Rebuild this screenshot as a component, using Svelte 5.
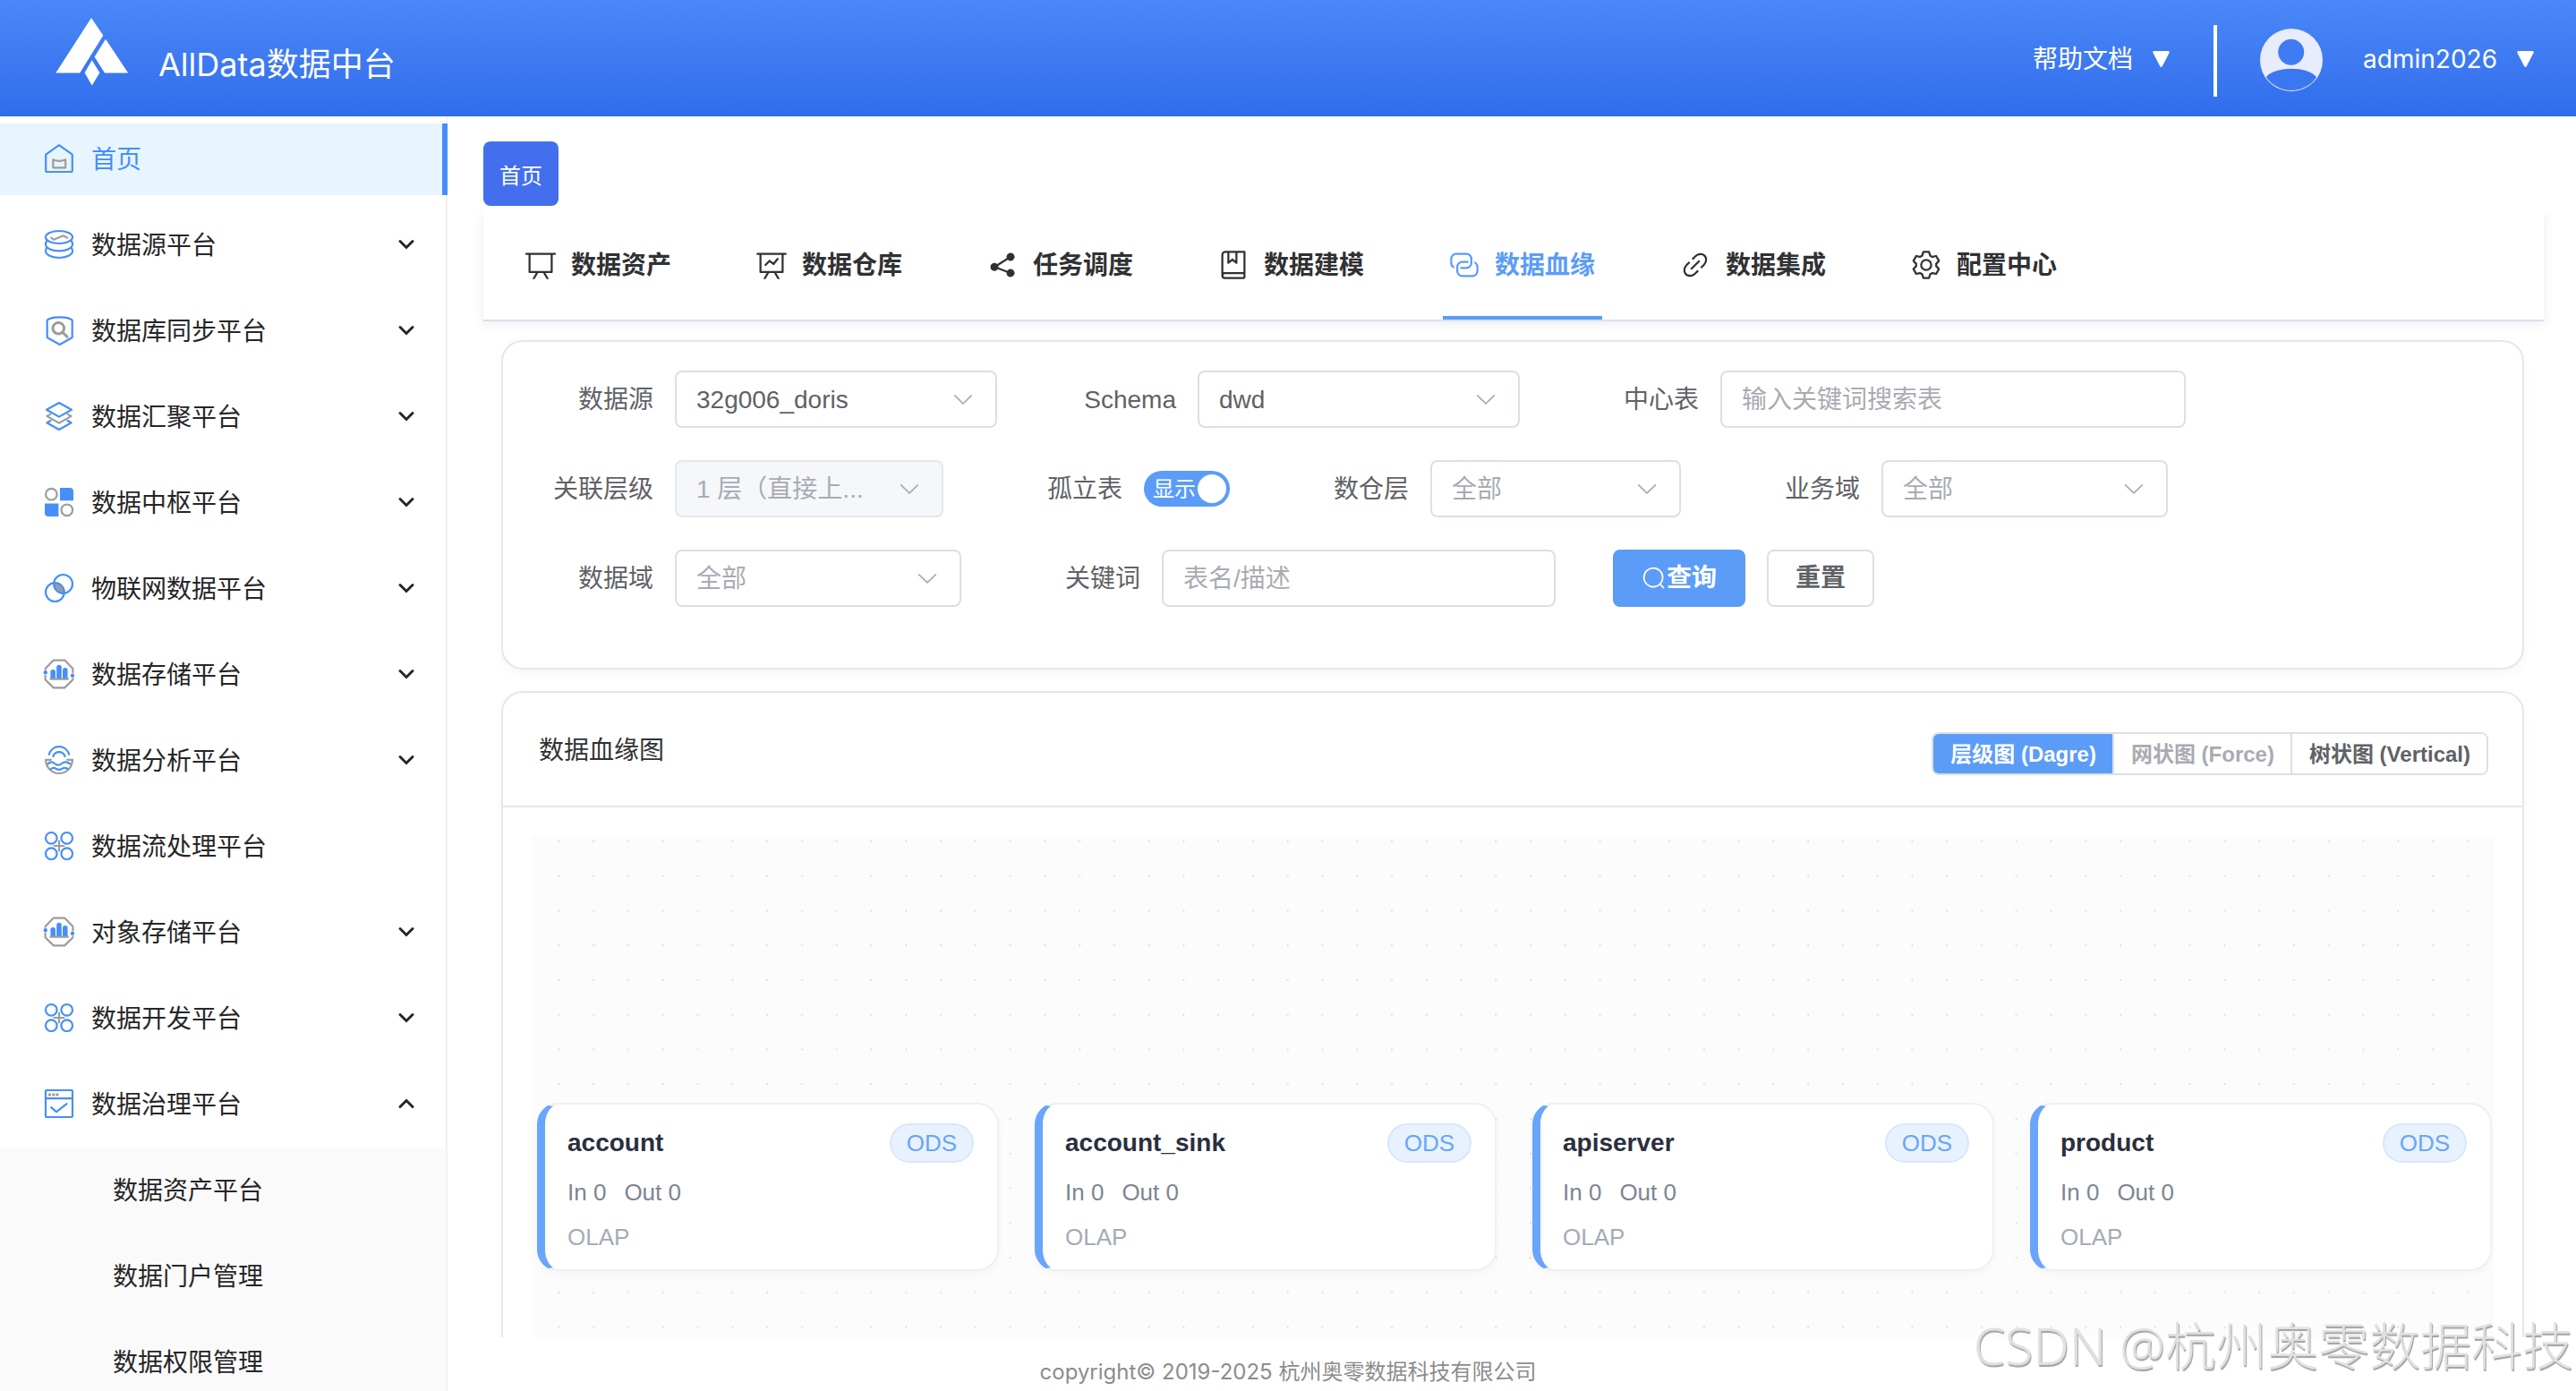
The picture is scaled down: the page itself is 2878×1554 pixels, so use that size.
<script>
  const menu = [
    { icon: 'db', label: '数据源平台', arrow: true },
    { icon: 'shield', label: '数据库同步平台', arrow: true },
    { icon: 'layers', label: '数据汇聚平台', arrow: true },
    { icon: 'hub', label: '数据中枢平台', arrow: true },
    { icon: 'iot', label: '物联网数据平台', arrow: true },
    { icon: 'storage', label: '数据存储平台', arrow: true },
    { icon: 'analysis', label: '数据分析平台', arrow: true },
    { icon: 'flow', label: '数据流处理平台', arrow: false },
    { icon: 'storage', label: '对象存储平台', arrow: true },
    { icon: 'flow', label: '数据开发平台', arrow: true },
    { icon: 'window', label: '数据治理平台', arrow: true, open: true }
  ];
  const submenu = ['数据资产平台', '数据门户管理', '数据权限管理'];

  const tabs = [
    {
      label: '数据资产',
      d: 'M32 128h960v64H32z M192 192v512h640V192H192zm-64-64h768v608a32 32 0 0 1-32 32H160a32 32 0 0 1-32-32V128z M322.176 960H248.32l110.848-192h73.856L322.176 960zm453.888 0h-73.856L591.36 768h73.856L776.064 960z'
    },
    {
      label: '数据仓库',
      d: 'M359.168 768H160a32 32 0 0 1-32-32V192H64a32 32 0 0 1 0-64h896a32 32 0 1 1 0 64h-64v544a32 32 0 0 1-32 32H665.216l110.848 192h-73.856L591.36 768H433.024L322.176 960H248.32l110.848-192zM832 192H192v512h640V192zM342.656 534.656a32 32 0 1 1-45.312-45.312L444.992 341.76l125.44 94.08L679.04 300.032a32 32 0 1 1 49.92 39.936L581.632 524.224 451.008 426.24 342.656 534.592z'
    },
    {
      label: '任务调度',
      d: 'm679.872 348.8-301.76 188.608a127.808 127.808 0 0 1 5.12 52.16l279.936 104.96a128 128 0 1 1-22.464 59.904l-279.872-104.96a128 128 0 1 1-16.64-166.272l301.696-188.608a128 128 0 1 1 33.92 54.272z'
    },
    {
      label: '数据建模',
      d: 'M192 736h640V128H256a64 64 0 0 0-64 64v544zm64-672h608a32 32 0 0 1 32 32v672a32 32 0 0 1-32 32H160l-32 57.536V192A128 128 0 0 1 256 64z M240 800a48 48 0 1 0 0 96h592v-96H240zm0-64h656v160a64 64 0 0 1-64 64H240a112 112 0 0 1 0-224zm144-608v250.88l96-76.8 96 76.8V128H384zm-64-64h320v381.44a32 32 0 0 1-51.968 24.96L480 384l-108.032 86.4A32 32 0 0 1 320 445.44V64z'
    },
    {
      label: '数据血缘',
      active: true,
      d: 'M640 384v64H448a128 128 0 0 0-128 128v128a128 128 0 0 0 128 128h320a128 128 0 0 0 128-128V576a128 128 0 0 0-64-110.848V394.88c74.56 26.368 128 97.472 128 181.056v128a192 192 0 0 1-192 192H448a192 192 0 0 1-192-192V576a192 192 0 0 1 192-192h192z M384 640v-64h192a128 128 0 0 0 128-128V320a128 128 0 0 0-128-128H256a128 128 0 0 0-128 128v128a128 128 0 0 0 64 110.848v70.272A192.064 192.064 0 0 1 64 448V320a192 192 0 0 1 192-192h320a192 192 0 0 1 192 192v128a192 192 0 0 1-192 192H384z'
    },
    {
      label: '数据集成',
      d: 'M715.648 625.152 670.4 579.904l90.496-90.56c75.008-74.944 85.12-186.368 22.656-248.896-62.528-62.464-173.952-52.352-248.96 22.656L444.16 353.6l-45.248-45.248 90.496-90.496c100.032-99.968 251.968-110.08 339.456-22.656 87.488 87.488 77.312 239.424-22.656 339.456l-90.496 90.496zm-90.496 90.496-90.496 90.496C434.624 906.112 282.688 916.224 195.2 828.8c-87.488-87.488-77.312-239.424 22.656-339.456l90.496-90.496 45.248 45.248-90.496 90.56c-75.008 74.944-85.12 186.368-22.656 248.896 62.528 62.464 173.952 52.352 248.96-22.656l90.496-90.496 45.248 45.248zm0-362.048 45.248 45.248L398.848 670.4 353.6 625.152 625.152 353.6z'
    },
    {
      label: '配置中心',
      d: 'M600.704 64a32 32 0 0 1 30.464 22.208l35.2 109.376c14.784 7.232 28.928 15.36 42.432 24.512l112.384-24.192a32 32 0 0 1 34.432 15.36L944.32 364.8a32 32 0 0 1-4.032 37.504l-77.12 85.12a357.12 357.12 0 0 1 0 49.024l77.12 85.248a32 32 0 0 1 4.032 37.504l-88.704 153.6a32 32 0 0 1-34.432 15.296L708.8 803.904c-13.44 9.088-27.648 17.28-42.368 24.512l-35.264 109.376A32 32 0 0 1 600.704 960H423.296a32 32 0 0 1-30.464-22.208L357.696 828.48a351.616 351.616 0 0 1-42.56-24.64l-112.32 24.256a32 32 0 0 1-34.432-15.36L79.68 659.2a32 32 0 0 1 4.032-37.504l77.12-85.248a357.12 357.12 0 0 1 0-48.896l-77.12-85.248A32 32 0 0 1 79.68 364.8l88.704-153.6a32 32 0 0 1 34.432-15.296l112.32 24.256c13.568-9.152 27.776-17.408 42.56-24.64l35.2-109.312A32 32 0 0 1 423.232 64H600.64zm-23.424 64H446.72l-36.352 113.088-24.512 11.968a294.113 294.113 0 0 0-34.816 20.096l-22.656 15.36-116.224-25.088-65.28 113.152 79.68 88.192-1.92 27.136a293.12 293.12 0 0 0 0 40.192l1.92 27.136-79.808 88.192 65.344 113.152 116.224-25.024 22.656 15.296a294.113 294.113 0 0 0 34.816 20.096l24.512 11.968L446.72 896h130.688l36.48-113.152 24.448-11.904a288.282 288.282 0 0 0 34.752-20.096l22.592-15.296 116.288 25.024 65.28-113.152-79.744-88.192 1.92-27.136a293.12 293.12 0 0 0 0-40.256l-1.92-27.136 79.808-88.128-65.344-113.152-116.288 24.96-22.592-15.232a287.616 287.616 0 0 0-34.752-20.096l-24.448-11.904L577.344 128zM512 320a192 192 0 1 1 0 384 192 192 0 0 1 0-384zm0 64a128 128 0 1 0 0 256 128 128 0 0 0 0-256z'
    }
  ];

  const fields = [
    { id: 'source', label: '数据源', kind: 'select', value: '32g006_doris', size: 'w360' },
    { id: 'schema', label: 'Schema', kind: 'select', value: 'dwd', size: 'w360' },
    { id: 'center', label: '中心表', kind: 'input', value: '输入关键词搜索表', size: 'w520' },
    { id: 'depth', label: '关联层级', kind: 'select', value: '1 层（直接上...', size: 'w300', disabled: true, muted: true },
    { id: 'orphan', label: '孤立表', kind: 'switch' },
    { id: 'layer', label: '数仓层', kind: 'select', value: '全部', size: 'w280', muted: true },
    { id: 'biz', label: '业务域', kind: 'select', value: '全部', size: 'w320', muted: true },
    { id: 'domain', label: '数据域', kind: 'select', value: '全部', size: 'w320', muted: true },
    { id: 'keyword', label: '关键词', kind: 'input', value: '表名/描述', size: 'w440' }
  ];

  const nodes = [
    { name: 'account', x: 6 },
    { name: 'account_sink', x: 562 },
    { name: 'apiserver', x: 1118 },
    { name: 'product', x: 1674 }
  ].map((n) => ({ ...n, y: 298 }));
</script>

{#snippet sideIcon(name)}
  <svg class="side-icon" viewBox="0 0 32 32" aria-hidden="true">
    {#if name === 'home'}
      <path class="b" d="M16 1.2 30.8 11.6V30a1 1 0 0 1-1 1H2.2a1 1 0 0 1-1-1V11.6Z" />
      <path class="g" d="M9.3 17.3Q16.2 20.6 23.2 17.3V26.3H9.3Z" />
    {:else if name === 'db'}
      <ellipse class="b" cx="16" cy="8" rx="15" ry="7" />
      <path class="b" d="M2.2 12.2C1.2 13.4 1 14.6 1 16c0 4 6.600 7.300 15 7.300S31 20 31 16c0-1.400-.2-2.600-1.200-3.800" />
      <path class="b" d="M2.200 20C1.200 21.200 1 22.400 1 23.600 1 27.600 7.600 31 16 31s15-3.400 15-7.400c0-1.200-.2-2.400-1.200-3.600" />
      <path class="g" d="M7.300 8.700 10 10.700 20.700 6.300 25.300 8.700" />
    {:else if name === 'shield'}
      <path class="b" d="M2.700 4.600C8 .4 25.400.4 30.700 4.600V24L16.700 32 2.700 24Z" />
      <circle class="g thick" cx="15.300" cy="13.700" r="6.300" />
      <path class="g thick" d="m20 18.400 5 4.800" />
    {:else if name === 'layers'}
      <path class="g" d="M6.500 13.600 2.400 15.900 16 23.600 29.600 15.900 25.500 13.600" />
      <path class="b" d="M6.500 21 2.400 23.300 16 31 29.600 23.300 25.500 21" />
      <path class="b" d="M16 1 30 8.800 16 16.600 2 8.800Z" />
    {:else if name === 'hub'}
      <circle class="g" cx="7.400" cy="7.200" r="6.300" />
      <circle class="g" cx="24.800" cy="24.800" r="6.300" />
      <path class="bf" d="M17 0h11a4 4 0 0 1 4 4v10.200H17ZM0 17.400h15.400V32H4a4 4 0 0 1-4-4Z" />
    {:else if name === 'iot'}
      <path class="gf" d="M10.600 10.200A10.500 10.500 0 0 1 21.800 21.400 10.500 10.500 0 0 1 10.600 10.200Z" />
      <circle class="b" cx="20.600" cy="11.400" r="10.400" />
      <circle class="b" cx="11.400" cy="20.600" r="10.400" />
    {:else if name === 'storage'}
      <path class="g" d="M.6 10.800V10L9.800.6H22.200L31.400 10v4.200M31.400 21.400V22.200L22.200 31.400H9.800L.6 22.200V17.800" />
      <path class="bf" d="M6.400 21.200v-7.400a2.800 2.800 0 0 1 5.600 0v7.400ZM13.200 21.200V8.600a2.800 2.800 0 0 1 5.600 0v12.600ZM20 21.200v-9.400a2.800 2.800 0 0 1 5.600 0v9.400Z" />
      <path class="g" d="M6.400 21.600H26" />
      <circle class="bf" cx=".8" cy="14.200" r="2.200" />
      <circle class="bf" cx="31" cy="17.800" r="2.200" />
    {:else if name === 'analysis'}
      <path class="b" d="M4.800 9.800C8.400-1.800 23.600-1.800 27.200 9.800M9.400 12c2.400-6.400 10.800-6.400 13.200 0" />
      <path class="g" d="M6.800 15.800H1C1.600 25.600 8.400 31 16 31s14.400-5.400 15-15.200h-5.800" />
      <path class="b" d="M3.600 20.400c2.400-2.600 5-2.600 7.400-.4 2.800 2.200 5.400 2.200 8 0 3-2.400 5.600-2.400 9.200.4M6.800 26c2.200-1.800 4-1.600 6 0 2.400 1.400 4.200 1.400 6.400 0 2-1.600 4-1.600 6.400 0" />
    {:else if name === 'flow'}
      <path class="g" d="M16 10.600v10.800M10.600 16h10.800" />
      <circle class="b" cx="7.300" cy="7.300" r="6.300" />
      <circle class="b" cx="24.700" cy="7.300" r="6.300" />
      <circle class="b" cx="7.300" cy="24.700" r="6.300" />
      <circle class="b" cx="24.700" cy="24.700" r="6.300" />
    {:else}
      <rect class="b" x="1" y="1" width="30" height="30" rx="1" />
      <path class="b" d="M1 10.200H31M7.200 20.200 13 25.200 24.600 16.200" />
      <path class="gf" d="M4 4.400h3v3H4ZM8.200 4.400h3v3h-3ZM12.400 4.400h3v3h-3Z" />
    {/if}
  </svg>
{/snippet}

{#snippet caret()}
  <svg class="caret" viewBox="0 0 19 18" aria-hidden="true">
    <path d="M1.200 0H17.800Q19.300.4 18.600 2L10.800 17Q9.500 18.800 8.200 17L.4 2Q-.3.4 1.200 0Z" fill="currentColor" />
  </svg>
{/snippet}

<div class="page">
  <header class="topbar">
    <svg class="logo" viewBox="62 20 82 76" aria-hidden="true">
      <path fill="#fff" d="M102 20 115.300 39.500 89.200 81.500H62.300ZM118 43.700 143.200 81.500H117L105.600 63.400ZM102.700 67.300 111.400 81.300 102.700 95.400 94.600 81.300Z" />
    </svg>
    <h1>AllData数据中台</h1>
    <button class="top-link" type="button">帮助文档 {@render caret()}</button>
    <span class="divider"></span>
    <svg class="avatar" viewBox="0 0 70 70" aria-hidden="true">
      <circle cx="35" cy="35" r="35" fill="#e8ecfb" />
      <circle cx="34.700" cy="26.200" r="14.500" fill="#3f7cf3" />
      <path d="M6.800 54.200C17 41.600 53 41.600 63.200 54.200A34.200 34.200 0 0 1 6.800 54.200Z" fill="#3b77f1" />
    </svg>
    <button class="top-link" type="button">admin2026 {@render caret()}</button>
  </header>

  <nav class="sidebar" aria-label="平台">
    <a class="side-item active" href="#home">{@render sideIcon('home')}<span>首页</span></a>
    {#each menu as m}
      <a class="side-item" href="#menu">
        {@render sideIcon(m.icon)}
        <span>{m.label}</span>
        {#if m.arrow}
          <svg class="chev" viewBox="0 0 18 12" aria-hidden="true">
            <path d={m.open ? 'M2 9.500 9 2.500 16 9.500' : 'M2 2.500 9 9.500 16 2.500'} />
          </svg>
        {/if}
      </a>
    {/each}
    <div class="submenu">
      {#each submenu as s}
        <a class="side-item sub" href="#sub"><span>{s}</span></a>
      {/each}
    </div>
  </nav>

  <main>
    <button class="chip" type="button">首页</button>
    <nav class="tabs" aria-label="模块">
      {#each tabs as t}
        <a class="tab" class:active={t.active} href="#tab">
          <svg viewBox="0 0 1024 1024" aria-hidden="true"><path fill="currentColor" d={t.d} /></svg>
          <span>{t.label}</span>
        </a>
      {/each}
    </nav>

    <div class="content">
      <form class="card filters" onsubmit={(e) => e.preventDefault()}>
        {#each fields as f}
          <div class="field">
            <label for={f.id}>{f.label}</label>
            {#if f.kind === 'select'}
              <span class="select {f.size}">
                <select id={f.id} class:muted={f.muted} disabled={f.disabled}>
                  <option>{f.value}</option>
                </select>
                <svg viewBox="0 0 1024 1024" aria-hidden="true">
                  <path fill="currentColor" d="M831.872 340.864 512 652.672 192.128 340.864a30.592 30.592 0 0 0-42.752 0 29.12 29.12 0 0 0 0 41.6L489.664 714.24a32 32 0 0 0 44.672 0l340.288-331.712a29.12 29.12 0 0 0 0-41.728 30.592 30.592 0 0 0-42.752 0z" />
                </svg>
              </span>
            {:else if f.kind === 'input'}
              <input id={f.id} class="text {f.size}" type="text" placeholder={f.value} />
            {:else}
              <span class="switch">
                <input id={f.id} type="checkbox" role="switch" checked />
                <span class="switch-text">显示</span>
                <span class="knob"></span>
              </span>
            {/if}
          </div>
        {/each}
        <div class="actions">
          <button class="btn primary" type="submit">
            <svg viewBox="0 0 1024 1024" aria-hidden="true">
              <path fill="currentColor" d="m795.904 750.72 124.992 124.928a32 32 0 0 1-45.248 45.248L750.656 795.904a416 416 0 1 1 45.248-45.248zM480 832a352 352 0 1 0 0-704 352 352 0 0 0 0 704z" />
            </svg>查询</button>
          <button class="btn" type="reset">重置</button>
        </div>
      </form>

      <section class="card graph">
        <div class="graph-head">
          <h2>数据血缘图</h2>
          <div class="group">
            <button type="button" class="on">层级图 (Dagre)</button>
            <button type="button" disabled>网状图 (Force)</button>
            <button type="button">树状图 (Vertical)</button>
          </div>
        </div>
        <div class="canvas">
          <svg class="dots" aria-hidden="true">
            <defs>
              <pattern id="dot-grid" x="29.300" y="4.800" width="38.770" height="38.770" patternUnits="userSpaceOnUse">
                <circle cx="1.200" cy="1.200" r="1.100" fill="#dcdcdc" />
              </pattern>
            </defs>
            <rect width="100%" height="100%" fill="url(#dot-grid)" />
          </svg>
          {#each nodes as n}
            <article class="node" style="left: {n.x}px; top: {n.y}px">
              <div class="node-head"><h3>{n.name}</h3><span class="badge">ODS</span></div>
              <p class="io"><span>In 0</span><span>Out 0</span></p>
              <p class="kind">OLAP</p>
            </article>
          {/each}
        </div>
      </section>
    </div>
  </main>

  <footer>copyright© 2019-2025 杭州奥零数据科技有限公司</footer>
  <div class="watermark">CSDN @杭州奥零数据科技</div>
</div>

<style>
  :global(body) {
    margin: 0;
    background: #fff;
  }
  .page {
    position: relative;
    display: grid;
    grid-template: 130px minmax(0, 1fr) 60px / 500px minmax(0, 1fr);
    height: 100vh;
    overflow: hidden;
    font-family: 'Liberation Sans', 'Noto Sans CJK SC', sans-serif;
    font-size: 28px;
    line-height: 40px;
    color: #606266;
  }
  .page :global(*) {
    box-sizing: border-box;
  }
  button,
  input,
  select {
    font: inherit;
    color: inherit;
  }
  a {
    color: inherit;
    text-decoration: none;
  }
  h1,
  h2,
  h3,
  p {
    margin: 0;
    font-weight: 400;
  }
  svg {
    display: block;
    flex: none;
    overflow: visible;
  }

  .topbar {
    grid-column: 1 / -1;
    display: flex;
    align-items: center;
    padding: 0 47px 0 62px;
    background: linear-gradient(#4b88f8, #306dec);
    color: #fff;
    font-family: Inter, 'Noto Sans CJK SC', sans-serif;
  }
  .logo {
    width: 82px;
    height: 76px;
    margin-bottom: 14px;
  }
  h1 {
    flex: 1;
    padding: 14px 0 0 33px;
    font-size: 36px;
    line-height: 48px;
  }
  .top-link {
    display: flex;
    align-items: center;
    gap: 22px;
    padding: 2px 0 0;
    border: 0;
    background: none;
  }
  .caret {
    width: 19px;
    height: 18px;
  }
  .divider {
    width: 4px;
    height: 80px;
    margin: 6px 48px 0 49px;
    background: #fff;
  }
  .avatar {
    width: 70px;
    height: 70px;
    margin: 4px 45px 0 0;
  }

  .sidebar {
    grid-area: 2 / 1 / 4 / 2;
    z-index: 1;
    padding-top: 8px;
    border-right: 2px solid #f0f0f0;
    background: #fff;
    color: #262626;
  }
  .side-item {
    display: flex;
    align-items: center;
    gap: 20px;
    height: 80px;
    margin-bottom: 16px;
    padding: 0 35px 2px 50px;
  }
  .side-item span {
    flex: 1;
    padding-top: 4px;
  }
  .side-item.active {
    margin-right: -2px;
    border-right: 6px solid #468ff8;
    background: #e7f5fe;
    color: #468ff8;
  }
  .submenu {
    margin-top: -8px;
    padding-top: 8px;
    background: #fafafa;
  }
  .side-item.sub {
    padding-left: 126px;
  }
  .side-icon {
    width: 32px;
    height: 32px;
  }
  .b,
  .g {
    fill: none;
    stroke: #468ff8;
    stroke-width: 2.2;
    stroke-linecap: round;
    stroke-linejoin: round;
  }
  .g {
    stroke: #9c9c9c;
  }
  .thick {
    stroke-width: 3;
  }
  .bf {
    fill: #468ff8;
  }
  .gf {
    fill: #9c9c9c;
  }
  .chev {
    width: 18px;
    height: 12px;
    fill: none;
    stroke: #262626;
    stroke-width: 3;
    stroke-linecap: round;
  }

  main {
    display: flex;
    flex-direction: column;
    min-height: 0;
    overflow: hidden;
    padding: 28px 36px 0 40px;
  }
  .chip {
    flex: none;
    align-self: flex-start;
    width: 84px;
    height: 72px;
    margin-bottom: 8px;
    padding: 5px 0 0;
    border: 0;
    border-radius: 8px;
    background: #436fee;
    color: #fff;
    font-size: 24px;
  }
  .tabs {
    flex: none;
    display: flex;
    gap: 80px;
    height: 121px;
    padding: 0 40px;
    border-bottom: 2px solid #dcdfe6;
    background: #fff;
    box-shadow: 0 2px 12px rgba(40, 60, 120, 0.1);
    clip-path: inset(0 -16px -24px);
    color: #303133;
    font-weight: 600;
  }
  .tab {
    display: flex;
    align-items: center;
    padding: 0 8px 0 6px;
    border-bottom: 4px solid transparent;
  }
  .tab svg {
    width: 36px;
    height: 36px;
    margin-right: 16px;
  }
  .tab span {
    padding-top: 2px;
  }
  .tab.active {
    border-color: #5b9cf8;
    color: #5b9cf8;
  }

  .content {
    flex: 1;
    display: flex;
    flex-direction: column;
    gap: 24px;
    min-height: 0;
    padding: 21px 22px 0 20px;
  }
  .card {
    flex: none;
    border: 2px solid #e4e7ed;
    border-radius: 24px;
    background: #fff;
    box-shadow: 0 4px 12px rgba(0, 0, 0, 0.04);
  }
  .filters {
    display: flex;
    flex-wrap: wrap;
    gap: 36px 64px;
    padding: 32px 32px 68px;
  }
  .field {
    display: flex;
    align-items: center;
    height: 64px;
  }
  label {
    width: 160px;
    padding: 2px 24px 0 0;
    text-align: right;
  }
  .select {
    position: relative;
    color: #a8abb2;
  }
  .select svg {
    position: absolute;
    top: 18px;
    right: 24px;
    width: 28px;
    height: 28px;
    pointer-events: none;
  }
  select,
  .text {
    height: 64px;
    padding: 2px 22px 0;
    border: 2px solid #dcdfe6;
    border-radius: 8px;
    background: #fff;
    color: #606266;
  }
  select {
    display: block;
    width: 100%;
    appearance: none;
    opacity: 1;
  }
  select.muted,
  .text::placeholder {
    color: #a8abb2;
  }
  select:disabled {
    border-color: #e4e7ed;
    background: #f5f7fa;
  }
  .w280 {
    width: 280px;
  }
  .w300 {
    width: 300px;
  }
  .w320 {
    width: 320px;
  }
  .w360 {
    width: 360px;
  }
  .w440 {
    width: 440px;
  }
  .w520 {
    width: 520px;
  }
  .switch {
    position: relative;
    display: flex;
    align-items: center;
    justify-content: space-between;
    width: 96px;
    height: 40px;
    padding: 0 4px 0 10px;
    border-radius: 20px;
    background: #5b9cf8;
    color: #fff;
    font-size: 24px;
  }
  .switch input {
    position: absolute;
    inset: 0;
    width: 100%;
    height: 100%;
    margin: 0;
    opacity: 0;
  }
  .switch-text {
    padding-top: 2px;
  }
  .knob {
    width: 32px;
    height: 32px;
    border-radius: 50%;
    background: #fff;
  }
  .actions {
    display: flex;
    gap: 24px;
  }
  .btn {
    display: flex;
    align-items: center;
    height: 64px;
    padding: 0 30px;
    border: 2px solid #dcdfe6;
    border-radius: 8px;
    background: #fff;
    font-weight: 600;
  }
  .btn svg {
    width: 28px;
    height: 28px;
  }
  .btn.primary {
    border-color: #5b9cf8;
    background: #5b9cf8;
    color: #fff;
  }

  .graph {
    flex: 1 0 auto;
    display: flex;
    flex-direction: column;
    height: 1000px;
  }
  .graph-head {
    display: flex;
    justify-content: space-between;
    height: 128px;
    padding: 36px 38px 34px 40px;
    border-bottom: 2px solid #e4e7ed;
  }
  h2 {
    font-size: 28px;
    line-height: 58px;
    color: #303133;
  }
  .group {
    display: flex;
    align-self: flex-end;
    height: 48px;
    border: 2px solid #dcdfe6;
    border-radius: 8px;
    overflow: hidden;
    font-size: 24px;
    font-weight: 600;
  }
  .group button {
    padding: 2px 18px 0 19px;
    border: 0;
    background: #fff;
  }
  .group button + button {
    border-left: 2px solid #dcdfe6;
  }
  .group button:disabled {
    color: #a8abb2;
  }
  .group .on {
    background: #5b9cf8;
    color: #fff;
  }
  .canvas {
    position: relative;
    flex: 1;
    margin: 32px;
    background: #fcfcfc;
  }
  .dots {
    width: 100%;
    height: 100%;
  }
  .node {
    position: absolute;
    width: 516px;
    height: 188px;
    padding: 21px 26px 0 25px;
    border: 2px solid #f0f0f0;
    border-left: 9px solid #69a5fb;
    border-radius: 24px;
    background: #fff;
    box-shadow: 0 4px 10px rgba(0, 0, 0, 0.03);
    font-size: 26px;
  }
  .node-head {
    display: flex;
    align-items: center;
    justify-content: space-between;
    height: 44px;
  }
  h3 {
    font-size: 28px;
    font-weight: 700;
    line-height: 36px;
    color: #2a2f3e;
  }
  .badge {
    padding: 0 17px;
    border: 2px solid #d6e7fd;
    border-radius: 22px;
    background: #e8f2fe;
    color: #69a5fb;
    line-height: 40px;
  }
  .io {
    display: flex;
    gap: 20px;
    margin-top: 15px;
    line-height: 36px;
    color: #7d8594;
  }
  .kind {
    margin-top: 14px;
    line-height: 36px;
    color: #a4abb8;
  }

  footer {
    grid-area: 3 / 1 / 4 / -1;
    padding-top: 21px;
    background: #fff;
    text-align: center;
    font-family: Inter, 'Noto Sans CJK SC', sans-serif;
    font-size: 24px;
    line-height: 36px;
    color: #8c8c8c;
  }
  .watermark {
    position: absolute;
    right: 3px;
    bottom: 11px;
    z-index: 2;
    font-family: 'Noto Sans', 'Noto Sans CJK SC', sans-serif;
    font-size: 57px;
    font-weight: 300;
    line-height: 80px;
    white-space: nowrap;
    color: #e0e0e0;
    text-shadow: 1px 2px 1px #a0a0a0;
  }
</style>
